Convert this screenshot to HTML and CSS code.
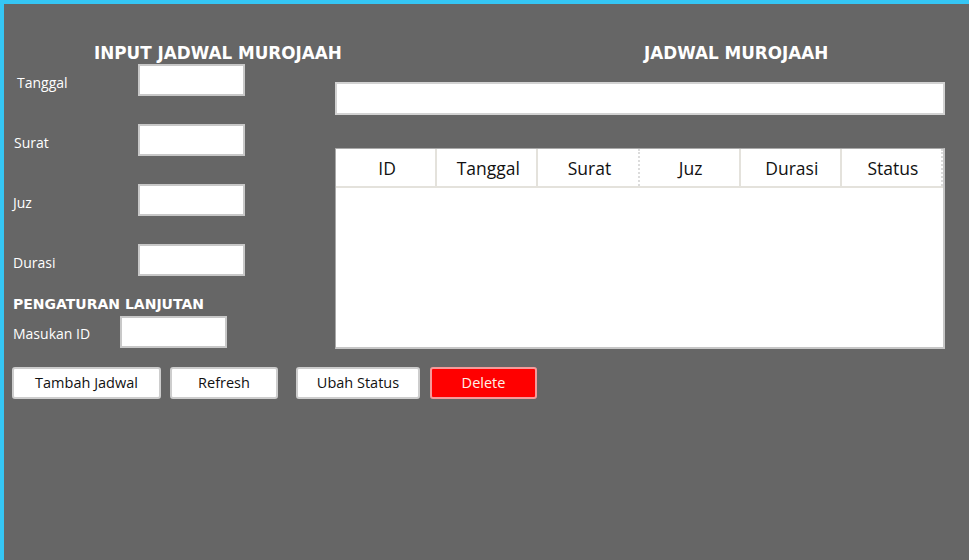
FILE: index.html
```html
<!DOCTYPE html>
<html>
<head>
<meta charset="utf-8">
<link rel="stylesheet" href="styles.css">
</head>
<body>
<div class="frame">
  <div class="main">
    <div class="left">
      <div class="title title-input">INPUT JADWAL MUROJAAH</div>
      <div class="form">
        <div class="row"><span class="label label-tanggal">Tanggal</span><span class="field"></span></div>
        <div class="row"><span class="label label-surat">Surat</span><span class="field"></span></div>
        <div class="row"><span class="label">Juz</span><span class="field"></span></div>
        <div class="row"><span class="label">Durasi</span><span class="field"></span></div>
      </div>
      <div class="subtitle">PENGATURAN LANJUTAN</div>
      <div class="row row-id"><span class="label label-id">Masukan ID</span><span class="field"></span></div>
    </div>
    <div class="right">
      <div class="title title-jadwal">JADWAL MUROJAAH</div>
      <div class="search"></div>
      <div class="table">
        <div class="thead">
          <div class="th">ID</div>
          <div class="th">Tanggal</div>
          <div class="th dotted">Surat</div>
          <div class="th">Juz</div>
          <div class="th">Durasi</div>
          <div class="th dotted">Status</div>
        </div>
        <div class="tbody"></div>
      </div>
    </div>
  </div>
  <div class="buttons">
    <button class="btn btn-tambah">Tambah Jadwal</button>
    <button class="btn btn-refresh">Refresh</button>
    <button class="btn btn-ubah">Ubah Status</button>
    <button class="btn btn-delete">Delete</button>
  </div>
</div>
</body>
</html>
```
FILE: styles.css
```css
html, body {
  margin: 0;
  padding: 0;
}
body {
  width: 969px;
  height: 560px;
  overflow: hidden;
  background: #666666;
  font-family: "Open Sans", "Noto Sans", sans-serif;
}
.frame {
  box-sizing: border-box;
  height: 560px;
  border-top: 4px solid #35c6f4;
  border-left: 4px solid #35c6f4;
  background: #666666;
}
.main {
  display: flex;
}
.left {
  width: 331px;
  padding-top: 39px;
  box-sizing: border-box;
  padding-left: 9px;
}
.title {
  color: #ffffff;
  font-family: "DejaVu Sans", sans-serif;
  font-weight: bold;
  font-size: 16.8px;
  line-height: 21px;
  height: 20px;
  white-space: nowrap;
}
.title-input {
  padding-left: 81px;
}
.form {
  display: flex;
  flex-direction: column;
  gap: 28px;
  margin-top: 1px;
}
.row {
  display: flex;
  align-items: center;
  height: 32px;
}
.label {
  width: 125px;
  color: #ffffff;
  font-size: 14px;
  padding-top: 5px;
}
.label-tanggal {
  padding-left: 4px;
  width: 121px;
}
.label-surat {
  padding-left: 1px;
  width: 124px;
}
.field {
  box-sizing: border-box;
  width: 107px;
  height: 32px;
  background: #ffffff;
  border: 2px solid #c8c8c8;
}
.subtitle {
  margin-top: 19px;
  color: #ffffff;
  font-family: "DejaVu Sans", sans-serif;
  font-weight: bold;
  font-size: 14px;
  line-height: 19px;
  height: 21px;
  white-space: nowrap;
}
.label-id {
  width: 107px;
  padding-top: 3px;
}
.right {
  width: 610px;
  padding-top: 39px;
}
.title-jadwal {
  padding-left: 309px;
}
.search {
  margin-top: 19px;
  box-sizing: border-box;
  height: 33px;
  background: #ffffff;
  border: 2px solid #d2d2d2;
}
.table {
  margin-top: 33px;
  box-sizing: border-box;
  height: 201px;
  background: #ffffff;
  border: 1px solid #a9a9a9;
  border-right: 2px solid #c6c6c6;
  border-bottom: 2px solid #c6c6c6;
}
.thead {
  display: flex;
  height: 37px;
  border-bottom: 2px solid #e4e2dc;
}
.th {
  flex: 1;
  display: flex;
  align-items: center;
  justify-content: center;
  font-size: 17.5px;
  color: #111111;
  border-right: 2px solid #e4e2dc;
  padding-top: 1px;
  padding-left: 3px;
}
.th.dotted {
  border-right: 2px dotted #dcdcdc;
}
.buttons {
  display: flex;
  padding-left: 8px;
  margin-top: 18px;
}
.btn {
  box-sizing: border-box;
  height: 32px;
  background: #ffffff;
  border: 2px solid #cdcdcd;
  border-radius: 3px;
  font-family: "Open Sans", "Noto Sans", sans-serif;
  font-size: 14.5px;
  color: #111111;
  padding: 0;
  padding-bottom: 2px;
}
.btn-tambah {
  width: 149px;
}
.btn-refresh {
  width: 108px;
  margin-left: 9px;
}
.btn-ubah {
  width: 124px;
  margin-left: 18px;
}
.btn-delete {
  width: 107px;
  margin-left: 10px;
  background: #ff0000;
  border-color: #f59a9a;
  color: #fff0e8;
}
```
